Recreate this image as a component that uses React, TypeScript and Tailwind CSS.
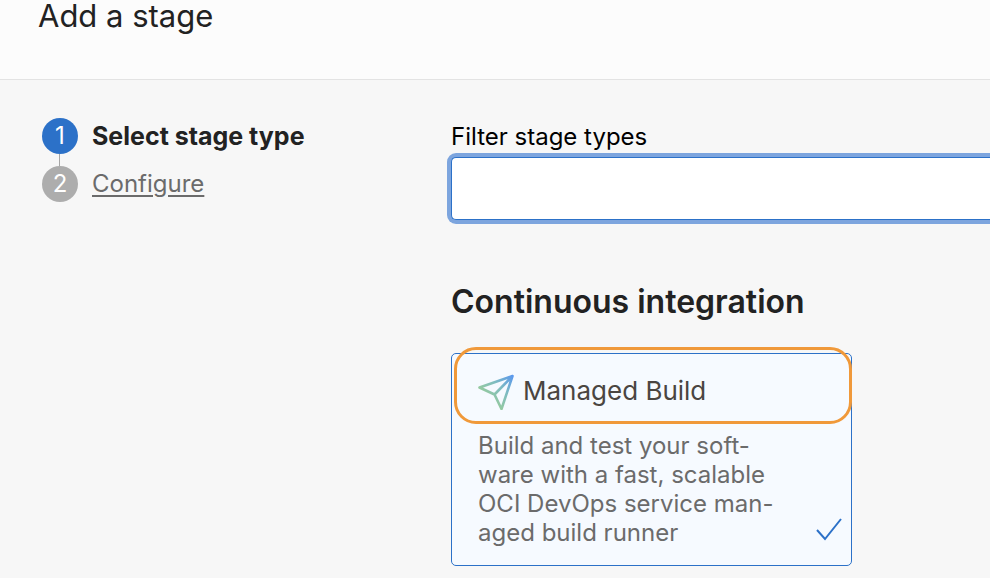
import React from "react";

const steps = [
  { label: "Select stage type", current: true },
  { label: "Configure", current: false },
];

function Steps() {
  return (
    <nav aria-label="Steps" className="w-[409px] shrink-0 pt-[38px]">
      <ol className="flex flex-col gap-3">
        {steps.map((step, i) => (
          <li key={step.label} className="relative flex h-9 items-center gap-[14px]">
            {i > 0 && <span className="absolute -top-3 left-[17px] h-3 w-px bg-[#a6a6a6]" />}
            <span
              className={
                step.current
                  ? "flex size-9 items-center justify-center rounded-full bg-[#2c71c8] text-[24px] leading-9 text-white"
                  : "flex size-9 items-center justify-center rounded-full bg-[#adadad] text-[24px] leading-9 text-white"
              }
            >
              {i + 1}
            </span>
            {step.current ? (
              <span aria-current="step" className="text-[25px] leading-9 font-bold text-[#222]">{step.label}</span>
            ) : (
              <a href="#configure" className="text-[24px] leading-9 text-[#6b6b6b] underline decoration-2 underline-offset-3">
                {step.label}
              </a>
            )}
          </li>
        ))}
      </ol>
    </nav>
  );
}

function StageCard() {
  return (
    <button
      type="button"
      aria-pressed="true"
      className="relative flex w-[401px] flex-col rounded-[5px] border border-[#2c71c8] bg-[#f6faff] pt-[19px] pr-[60px] pb-[18px] pl-[26px] text-left"
    >
      <span className="absolute -top-[7px] left-[2px] h-[77px] w-[398px] rounded-[22px] border-3 border-[#f0993a]" />
      <span className="flex h-9 items-center gap-2">
        <svg viewBox="0 0 37 38" className="h-[38px] w-[37px]" fill="none" aria-hidden="true">
          <defs>
            <linearGradient id="plane" x1="10" y1="27" x2="34" y2="3" gradientUnits="userSpaceOnUse">
              <stop offset="0" stopColor="#97cb9d" />
              <stop offset="0.5" stopColor="#7fbcc0" />
              <stop offset="1" stopColor="#5b98ee" />
            </linearGradient>
          </defs>
          <path d="M34.5 4 1.5 15.5l15 7L23.5 37 34.5 4ZM34.5 4l-18 18.5" stroke="url(#plane)" strokeWidth="2.6" strokeLinejoin="round" />
        </svg>
        <span className="text-[26px] leading-9 text-[#4a4541]">Managed Build</span>
      </span>
      <span className="mt-[22px] text-[24px] leading-[29px] whitespace-nowrap text-[#6b6b6b]">
        Build and test your soft-
        <br />
        ware with a fast, scalable
        <br />
        OCI DevOps service man-
        <br />
        aged build runner
      </span>
      <svg viewBox="0 0 26 24" className="absolute right-[9px] bottom-[23px] h-6 w-[26px]" fill="none" aria-hidden="true">
        <path d="m1 12 8 9L25 1" stroke="#2c71c8" strokeWidth="2" />
      </svg>
    </button>
  );
}

export default function App() {
  return (
    <div className="min-h-screen bg-[#f7f7f7] font-['Inter','Liberation_Sans',sans-serif] text-[#222]">
      <header className="h-20 border-b border-[#e3e3e3] bg-[#fcfcfc] pl-[38px]">
        <h1 className="text-[31px] leading-8">Add a stage</h1>
      </header>
      <main className="flex pl-[42px]">
        <Steps />
        <div className="min-w-0 flex-1 pt-10">
          <label htmlFor="filter" className="block text-[24px] leading-[34px] text-black">Filter stage types</label>
          <input
            id="filter"
            type="text"
            className="mt-[3px] block h-[63px] w-full rounded-l-[5px] border border-r-0 border-[#2c71c8] bg-white px-4 text-[24px] ring-4 ring-[#7da5de] outline-none"
          />
          <h2 className="mt-[62px] mb-[31px] text-[32px] leading-10 font-semibold">Continuous integration</h2>
          <StageCard />
        </div>
      </main>
    </div>
  );
}
